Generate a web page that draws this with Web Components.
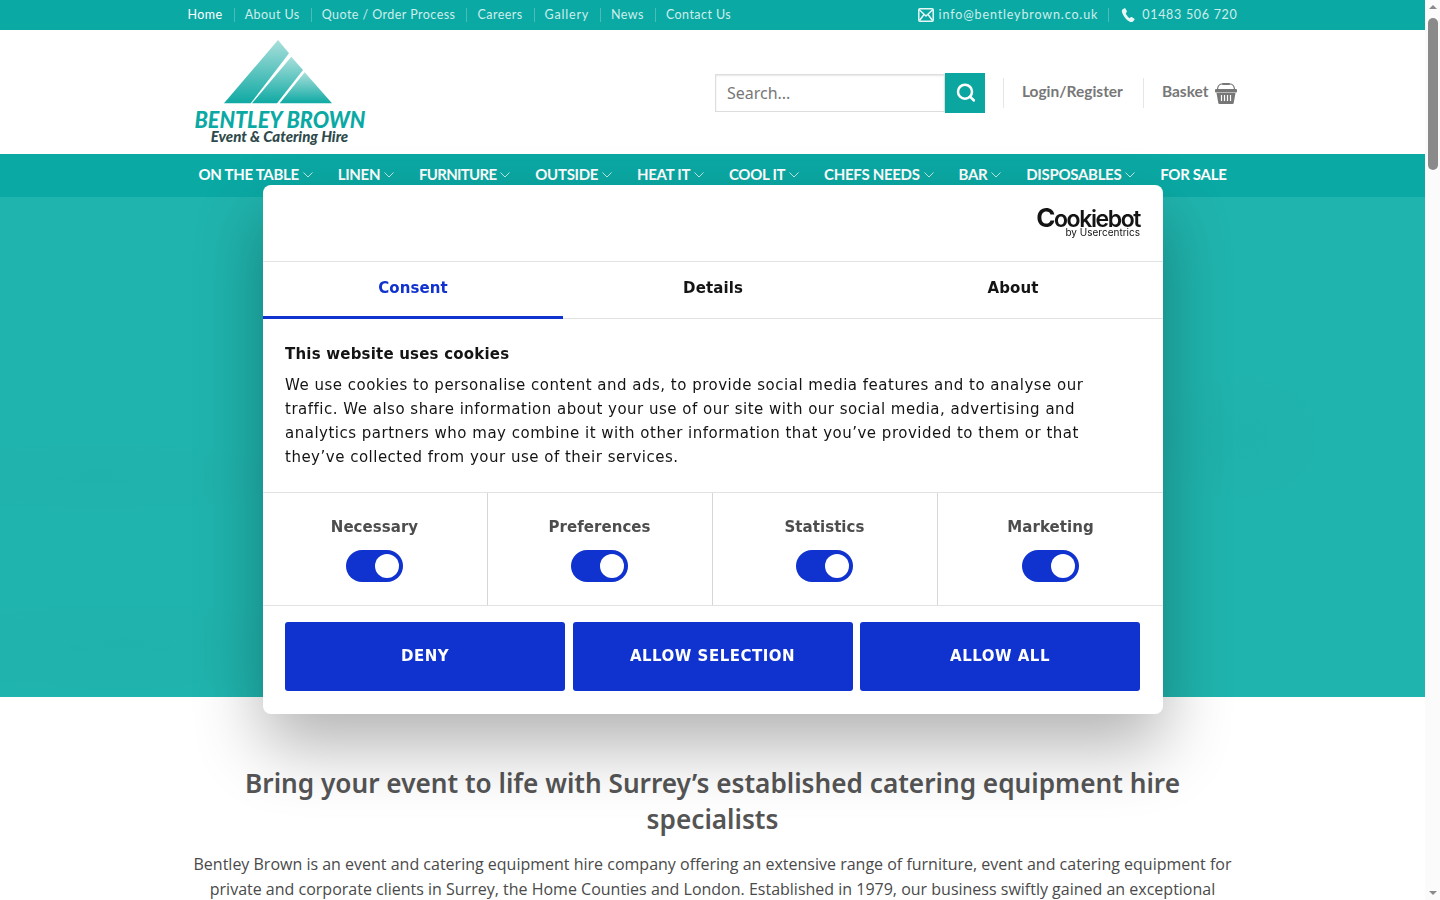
<!DOCTYPE html>
<html lang="en">
<head>
<meta charset="utf-8">
<title>Bentley Brown</title>
<style>
  html, body { margin: 0; height: 100%; overflow: hidden; background: #fff; }
  body { display: flex; font-family: "Open Sans", sans-serif; }
  #page { width: 1425px; flex: none; }
</style>
</head>
<body>
<div id="page">
  <top-bar></top-bar>
  <site-header></site-header>
  <main-nav></main-nav>
  <hero-band></hero-band>
  <intro-copy></intro-copy>
</div>
<fake-scrollbar></fake-scrollbar>
<cookie-dialog></cookie-dialog>

<script>
class TopBar extends HTMLElement {
  constructor() {
    super();
    this.attachShadow({ mode: "open" });
  }

  connectedCallback() {
    const links = ["Home", "About Us", "Quote / Order Process", "Careers", "Gallery", "News", "Contact Us"];
    this.shadowRoot.innerHTML = /* html */`
      <style>
        :host { display: block; height: 30px; background: #0ba9a4; color: #cdeeeb; font: 12.5px/30px Lato, sans-serif; letter-spacing: .45px; }
        .wrap { width: 1050px; margin: 0 auto; display: flex; justify-content: space-between; }
        ul { display: flex; align-items: center; margin: 0; padding: 0; list-style: none; }
        li { padding: 0 11px; position: relative; height: 30px; }
        li:first-child { padding-left: 0; color: #fff; }
        li:nth-child(5) { letter-spacing: .8px; }
        li + li::before { content: ""; position: absolute; left: 0; top: 8px; height: 14px; width: 1px; background: rgba(255,255,255,.25); }
        .contact svg { flex: none; }
        .contact li { display: flex; align-items: center; padding: 0 0 0 13px; }
        .contact li:first-child { padding-right: 10px; color: #cdeeeb; letter-spacing: .87px; }
        .contact li:first-child svg { margin-right: 5px; }
        .contact li:last-child { letter-spacing: .7px; }
        .contact li:last-child svg { margin-right: 6px; }
      </style>
      <div class="wrap">
        <ul>${links.map(l => `<li>${l}</li>`).join("")}</ul>
        <ul class="contact">
          <li><svg width="16" height="14" viewBox="0 0 16 14" fill="none" stroke="#e6f7f6" stroke-width="1.500"><rect x=".8" y=".8" width="14.400" height="12.400" rx="1"/><path d="M1 1.500l7 6.500 7-6.500M1.500 12.500L6 6.500M14.500 12.500L10 6.500"/></svg>info@bentleybrown.co.uk</li>
          <li><svg width="15" height="16" viewBox="0 0 16 16" fill="#e6f7f6"><path d="M3.600.8L1.500 2.200C.6 3 .8 5 2 7.500c1.500 3 4 6 6.800 7.500 1.700.8 3.200.8 4-.1l1.600-1.800c.3-.4.2-.9-.2-1.200l-2.700-1.700c-.4-.2-.8-.2-1.100.1l-1 1c-.9-.1-3.900-3.300-4.300-5.300l1-1.100c.3-.3.3-.7.1-1.100L4.700 1c-.3-.4-.7-.4-1.100-.2z"/></svg>01483 506 720</li>
        </ul>
      </div>`;
  }
}

class SiteHeader extends HTMLElement {
  constructor() {
    super();
    this.attachShadow({ mode: "open" });
  }

  connectedCallback() {
    this.shadowRoot.innerHTML = /* html */`
      <style>
        :host { display: block; height: 124px; background: #fff; }
        .wrap { width: 1050px; height: 124px; margin: 0 auto; display: flex; justify-content: space-between; }
        .logo { margin: 10px 0 0 7px; width: 170px; display: flex; flex-direction: column; align-items: center; }
        .logo svg { display: block; margin-left: -4px; }
        .brand { font: italic 900 23.500px/20px Lato, sans-serif; color: #0ba9a4; white-space: nowrap; margin-top: 5px; transform: scaleX(.92); }
        .strap { font: italic 900 15px/14px Lato, sans-serif; color: #2f4a4c; white-space: nowrap; }
        .tools { display: flex; align-items: center; color: #777; font: 700 15.500px Lato, sans-serif; padding: 2px 1px 0 0; }
        .search { display: flex; align-items: center; }
        .field { width: 228px; height: 36px; border: 1px solid #ddd; box-shadow: inset 0 1px 2px rgba(0,0,0,.1); font: 16px/36px "Noto Sans", sans-serif; color: #777; text-indent: 11px; }
        .go { width: 40px; height: 40px; background: #0ba6a0; display: flex; align-items: center; justify-content: center; }
        .link { border-left: 1px solid #e6e6e6; height: 30px; display: flex; align-items: center; }
        .link span { position: relative; top: -2px; }
        .login { margin-left: 18px; padding: 0 20px 0 18px; }
        .basket { padding-left: 18px; }
        .basket svg { margin-left: 6px; }
      </style>
      <div class="wrap">
        <div class="logo">
          <svg width="108" height="64" viewBox="0 0 108 64">
            <defs>
              <linearGradient id="g" x1="0" y1="0" x2="0" y2="1"><stop offset="0" stop-color="#a9dfdb"/><stop offset="1" stop-color="#0fa9a3"/></linearGradient>
            </defs>
            <path fill="url(#g)" d="M54 0L65 13.300L26.700 63.300H0z"/>
            <path fill="url(#g)" d="M67.300 16.700L79 30L53 63.300H28z"/>
            <path fill="url(#g)" d="M80.700 32.300L108 63.300H55.700z"/>
          </svg>
          <div class="brand">BENTLEY BROWN</div>
          <div class="strap">Event &amp; Catering Hire</div>
        </div>
        <div class="tools">
          <div class="search">
            <div class="field">Search...</div>
            <div class="go"><svg width="20" height="20" viewBox="0 0 20 20" fill="none" stroke="#fff" stroke-width="2.500"><circle cx="10" cy="8.700" r="7"/><path d="M15 13.700l4 3.800" stroke-linecap="round"/></svg></div>
          </div>
          <div class="link login"><span>Login/Register</span></div>
          <div class="link basket"><span>Basket</span>
            <svg width="22" height="21" viewBox="0 0 22 21" fill="#777"><path d="M2.500 6C3 2.500 4.500 1 7 1h8c2.500 0 4 1.500 4.500 5" fill="none" stroke="#777" stroke-width="1.200"/><rect x="7" y="0" width="8" height="2" rx="1"/><rect x="0" y="6" width="22" height="3.500" rx="1"/><path d="M1.500 10h19l-1.800 10a1.200 1.200 0 0 1-1.200 1h-13a1.200 1.200 0 0 1-1.200-1z"/><path d="M6.500 12v6M9.500 12v6M12.500 12v6M15.500 12v6" stroke="#fff" stroke-width="1.200"/></svg>
          </div>
        </div>
      </div>`;
  }
}

class MainNav extends HTMLElement {
  constructor() {
    super();
    this.attachShadow({ mode: "open" });
  }

  connectedCallback() {
    const items = ["ON THE TABLE", "LINEN", "FURNITURE", "OUTSIDE", "HEAT IT", "COOL IT", "CHEFS NEEDS", "BAR", "DISPOSABLES", "FOR SALE"];
    const chevron = `<svg width="10" height="6" viewBox="0 0 10 6" fill="none" stroke="#bfe8e5" stroke-width="1"><path d="M.5.500L5 5l4.500-4.500"/></svg>`;
    this.shadowRoot.innerHTML = /* html */`
      <style>
        :host { display: block; height: 43px; background: #0ba9a4; color: #fff; font: 700 15px/41px Lato, sans-serif; letter-spacing: -.3px; }
        ul { width: 1050px; margin: 0 auto; list-style: none; display: flex; justify-content: space-between; box-sizing: border-box; padding: 0 11px; }
        li { display: flex; align-items: center; gap: 4px; white-space: nowrap; }
        li:nth-child(3) { letter-spacing: -.7px; }
      </style>
      <ul>${items.map((t, i) => `<li>${t}${i < items.length - 1 ? chevron : ""}</li>`).join("")}</ul>`;
  }
}

class HeroBand extends HTMLElement {
  constructor() {
    super();
    this.attachShadow({ mode: "open" });
    this.shadowRoot.innerHTML = /* html */`
      <style>
        :host { display: block; height: 500px; background:
          radial-gradient(ellipse 90px 70px at 1240px 240px, rgba(0,60,60,.025), transparent),
          radial-gradient(ellipse 220px 40px at 100px 280px, rgba(0,60,60,.018), transparent),
          radial-gradient(ellipse 260px 50px at 120px 450px, rgba(0,60,60,.02), transparent),
          #20b4ae; }
      </style>`;
  }
}

class IntroCopy extends HTMLElement {
  constructor() {
    super();
    this.attachShadow({ mode: "open" });
    this.shadowRoot.innerHTML = /* html */`
      <style>
        :host { display: block; width: 1050px; margin: 0 auto; padding-top: 68px; text-align: center; }
        h1 { margin: 0 0 15px; padding: 0 40px; font: 600 26.200px/36px "Noto Sans", sans-serif; color: #555; }
        p { margin: 0; font: 16px/25px "Open Sans", sans-serif; color: #4a4a4a; }
      </style>
      <h1>Bring your event to life with Surrey’s established catering equipment hire specialists</h1>
      <p>Bentley Brown is an event and catering equipment hire company offering an extensive range of furniture, event and catering equipment for private and corporate clients in Surrey, the Home Counties and London. Established in 1979, our business swiftly gained an exceptional</p>`;
  }
}

class FakeScrollbar extends HTMLElement {
  constructor() {
    super();
    this.attachShadow({ mode: "open" });
    this.shadowRoot.innerHTML = /* html */`
      <style>
        :host { display: flex; flex-direction: column; align-items: center; width: 15px; height: 900px; background: #fbfbfb; flex: none; }
        .arrow { width: 0; height: 0; border: 4px solid transparent; margin: 5px 0; }
        .up { border-top: 0; border-bottom: 4px solid #8a8a8a; }
        .down { border-bottom: 0; border-top: 4px solid #8a8a8a; margin-top: auto; }
        .thumb { width: 10px; height: 152px; background: #8a8a8a; border-radius: 5px; margin-top: 4px; }
      </style>
      <div class="arrow up"></div>
      <div class="thumb"></div>
      <div class="arrow down"></div>`;
  }
}

class CookieToggle extends HTMLElement {
  constructor() {
    super();
    this.attachShadow({ mode: "open" });
    this.shadowRoot.innerHTML = /* html */`
      <style>
        :host { width: 225px; box-sizing: border-box; display: flex; flex-direction: column; align-items: center; gap: 11px; padding: 22px 1px 0 0; color: #4d4d4d; font-weight: 700; letter-spacing: .05px; border-right: 1px solid #d6d6d6; }
        :host(:last-child) { border-right: 0; padding-right: 0; }
        .track { width: 57px; height: 32px; border-radius: 16px; background: #1032cf; position: relative; }
        .knob { position: absolute; right: 4px; top: 4px; width: 24px; height: 24px; border-radius: 50%; background: #fff; }
      </style>
      <slot></slot>
      <div class="track"><div class="knob"></div></div>`;
  }
}

class CookieDialog extends HTMLElement {
  constructor() {
    super();
    this.attachShadow({ mode: "open" });
  }

  connectedCallback() {
    this.shadowRoot.innerHTML = /* html */`
      <style>
        :host { position: fixed; left: 263px; top: 185px; width: 900px; height: 529px; background: #fff; border-radius: 8px; box-shadow: 0 32px 68px rgba(0,0,0,.3); color: #141414; font: 15px/24px "DejaVu Sans", Verdana, sans-serif; letter-spacing: .5px; display: flex; flex-direction: column; }
        .brandbar { height: 76px; border-bottom: 1px solid #e2e2e2; display: flex; flex-direction: column; align-items: flex-end; padding: 0 23px 0 0; }
        .cb { font: 600 23px/18px Inter, sans-serif; letter-spacing: -1.400px; margin-top: 24px; color: #141414; }
        .cb span { font-size: 26px; font-weight: 700; }
        .by { font: 10px/10px Inter, sans-serif; letter-spacing: 0; margin-top: -1px; color: #141414; }
        .tabs { height: 56px; display: flex; border-bottom: 1px solid #e2e2e2; font-weight: 700; text-align: center; letter-spacing: .1px; }
        .tabs div { flex: 1; line-height: 52px; box-sizing: border-box; height: 56px; }
        .tabs .on { color: #1032cf; border-bottom: 3px solid #1032cf; height: 57px; }
        .body { height: 174px; box-sizing: border-box; padding: 23px 22px 0; border-bottom: 1px solid #e2e2e2; }
        .body b { display: block; letter-spacing: .2px; }
        .body p { margin: 7px 0 0; }
        .toggles { height: 113px; display: flex; border-bottom: 1px solid #e2e2e2; box-sizing: border-box; }
        .actions { display: flex; gap: 7.500px; padding: 16px 23px 0 22px; }
        .btn { flex: 1; height: 69px; box-sizing: border-box; padding-bottom: 2px; background: #1032cf; color: #fff; font-weight: 700; letter-spacing: .5px; border-radius: 3px; display: flex; align-items: center; justify-content: center; }
      </style>
      <div class="brandbar">
        <div class="cb"><span>C</span>ookiebot</div>
        <div class="by">by Usercentrics</div>
      </div>
      <div class="tabs"><div class="on">Consent</div><div>Details</div><div>About</div></div>
      <div class="body">
        <b>This website uses cookies</b>
        <p>We use cookies to personalise content and ads, to provide social media features and to analyse our traffic. We also share information about your use of our site with our social media, advertising and analytics partners who may combine it with other information that you’ve provided to them or that they’ve collected from your use of their services.</p>
      </div>
      <div class="toggles">
        <cookie-toggle>Necessary</cookie-toggle>
        <cookie-toggle>Preferences</cookie-toggle>
        <cookie-toggle>Statistics</cookie-toggle>
        <cookie-toggle>Marketing</cookie-toggle>
      </div>
      <div class="actions"><div class="btn">DENY</div><div class="btn">ALLOW SELECTION</div><div class="btn">ALLOW ALL</div></div>`;
  }
}

customElements.define("top-bar", TopBar);
customElements.define("site-header", SiteHeader);
customElements.define("main-nav", MainNav);
customElements.define("hero-band", HeroBand);
customElements.define("intro-copy", IntroCopy);
customElements.define("fake-scrollbar", FakeScrollbar);
customElements.define("cookie-toggle", CookieToggle);
customElements.define("cookie-dialog", CookieDialog);
</script>
</body>
</html>
